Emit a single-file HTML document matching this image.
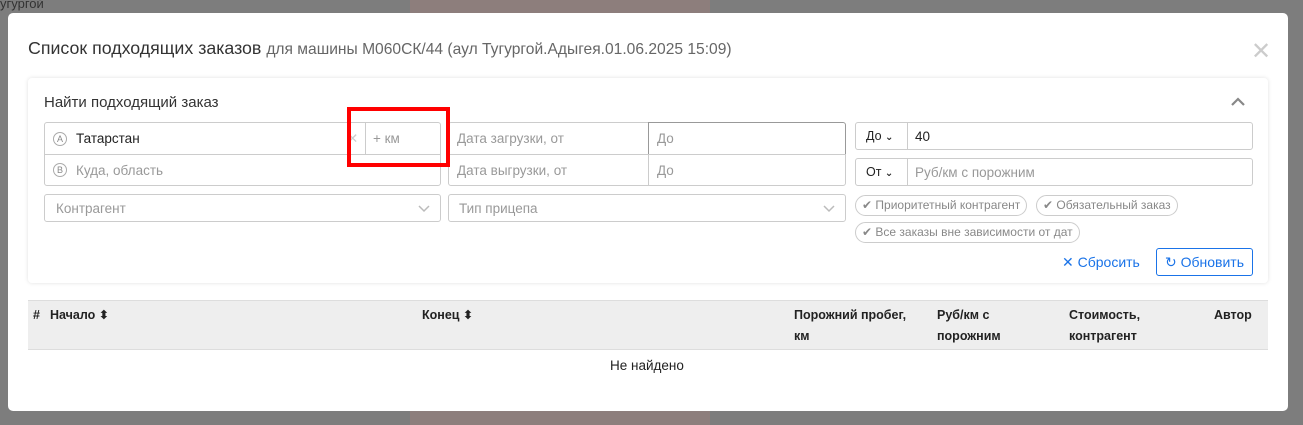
<!DOCTYPE html>
<html><head><meta charset="utf-8"><style>
*{box-sizing:border-box;margin:0;padding:0}
body{width:1303px;height:425px;overflow:hidden;background:#7d7d7d;font-family:"Liberation Sans","DejaVu Sans",sans-serif;position:relative;color:#333}
.a{position:absolute}
.bgl{position:absolute;background:#727272}
.modal{position:absolute;left:8px;top:13px;width:1280px;height:398px;background:#fff;border-radius:5px}
.t{font-size:17.8px;color:#333;white-space:nowrap}
.t small{font-size:15.6px;color:#666}
.card{position:absolute;left:20px;top:65px;width:1240px;height:205px;background:#fff;border-radius:4px;box-shadow:0 0 4px rgba(0,0,0,.12)}
.box{position:absolute;border:1px solid #ccc;background:#fff;border-radius:3px;font-size:13.5px;color:#999;display:flex;align-items:center}
.ph{color:#999}
.circ{display:inline-block;width:14px;height:14px;border:1px solid #aaa;border-radius:50%;font-size:9px;text-align:center;line-height:12px;color:#888;margin:0 9px 0 8px}
.tag{position:absolute;height:21px;border:1px solid #ccc;border-radius:11px;font-size:12px;color:#888;padding:0 6px;line-height:19px;white-space:nowrap}
.th{position:absolute;font-size:12.5px;font-weight:bold;color:#222;line-height:21px}
</style></head><body>
<div class="a" style="left:567px;top:0;width:100px;height:10px;background:#8e7a50;border-radius:0 0 2px 2px"></div>
<div class="a" style="left:0;top:-4px;font-size:13px;color:#333">угургой</div>
<div class="a" style="left:410px;top:0;width:300px;height:13px;background:#8d7e7c"></div>
<div class="a" style="left:410px;top:411px;width:300px;height:14px;background:#8d7e7c"></div>
<div class="modal">
 <div class="a t" style="left:20px;top:25px">Список подходящих заказов <small>для машины М060СК/44 (аул Тугургой.Адыгея.01.06.2025 15:09)</small></div>
 <div class="a" style="left:1243px;top:24px;font-size:24px;color:#ccc">✕</div>
 <div class="card">
  <div class="a" style="left:16px;top:16px;font-size:15px;color:#333">Найти подходящий заказ</div>
  <svg class="a" style="left:1203px;top:19px" width="14" height="10"><path d="M1 8 L7 2 L13 8" stroke="#888" stroke-width="2.2" fill="none"/></svg>
  <div class="box" style="left:16px;top:44px;width:397px;height:33px;border-radius:3px 3px 0 0;color:#222"><span class="circ">A</span>Татарстан<span style="position:absolute;left:302px;color:#ccc">✕</span><span style="position:absolute;left:320px;top:0;height:31px;border-left:1px solid #ccc"></span><span class="ph" style="position:absolute;left:328px">+ км</span></div>
  <div class="box" style="left:16px;top:76px;width:397px;height:32px;border-radius:0 0 3px 3px"><span class="circ">B</span>Куда, область</div>
  <div class="box" style="left:16px;top:116px;width:397px;height:28px;padding-left:11px">Контрагент<svg class="a" style="left:373px;top:10px" width="12" height="8"><path d="M1 1 L6 6 L11 1" stroke="#bbb" stroke-width="1.5" fill="none"/></svg></div>
  <div class="box" style="left:420px;top:44px;width:202px;height:33px;padding-left:8px;border-radius:3px 0 0 0">Дата загрузки, от</div>
  <div class="box" style="left:620px;top:44px;width:198px;height:33px;padding-left:8px;border-color:#999;border-radius:0 3px 0 0">До</div>
  <div class="box" style="left:420px;top:76px;width:202px;height:32px;padding-left:8px;border-radius:0 0 0 3px">Дата выгрузки, от</div>
  <div class="box" style="left:620px;top:76px;width:198px;height:32px;padding-left:8px;border-radius:0 0 3px 0">До</div>
  <div class="box" style="left:420px;top:116px;width:398px;height:28px;padding-left:10px">Тип прицепа<svg class="a" style="left:374px;top:10px" width="12" height="8"><path d="M1 1 L6 6 L11 1" stroke="#bbb" stroke-width="1.5" fill="none"/></svg></div>
  <div class="box" style="left:827px;top:44px;width:398px;height:28px;color:#222"><span style="width:52px;padding-left:10px;border-right:1px solid #ccc;height:26px;line-height:26px;font-size:12.5px">До <b style="font-size:10px">⌄</b></span><span style="padding-left:7px">40</span></div>
  <div class="box" style="left:827px;top:80px;width:398px;height:28px"><span style="width:52px;padding-left:10px;border-right:1px solid #ccc;height:26px;line-height:26px;font-size:12.5px;color:#222">От <b style="font-size:10px">⌄</b></span><span style="padding-left:7px">Руб/км с порожним</span></div>
  <div class="tag" style="left:827px;top:117px">✔ Приоритетный контрагент</div>
  <div class="tag" style="left:1008px;top:117px">✔ Обязательный заказ</div>
  <div class="tag" style="left:827px;top:144px">✔ Все заказы вне зависимости от дат</div>
  <div class="a" style="left:1034px;top:176px;font-size:14px;color:#1a73e8">✕ Сбросить</div>
  <div class="a" style="left:1128px;top:170px;width:97px;height:28px;border:1px solid #1a73e8;border-radius:3px;font-size:14px;color:#1a73e8;line-height:26px;padding-left:8px">↻ Обновить</div>
 </div>
 <div class="a" style="left:20px;top:287px;width:1240px;height:50px;background:#eee;border-top:1px solid #ddd;border-bottom:1px solid #ddd"></div>
 <div class="th" style="left:25px;top:292px">#</div>
 <div class="th" style="left:42px;top:292px">Начало ⬍</div>
 <div class="th" style="left:414px;top:292px">Конец ⬍</div>
 <div class="th" style="left:786px;top:292px">Порожний пробег,<br>км</div>
 <div class="th" style="left:929px;top:292px">Руб/км с<br>порожним</div>
 <div class="th" style="left:1061px;top:292px">Стоимость,<br>контрагент</div>
 <div class="th" style="left:1206px;top:292px">Автор</div>
 <div class="a" style="left:602px;top:345px;font-size:13.5px;color:#222">Не найдено</div>
</div>
<div class="a" style="left:347px;top:107px;width:103px;height:60px;border:4px solid #f00"></div>
</body></html>
